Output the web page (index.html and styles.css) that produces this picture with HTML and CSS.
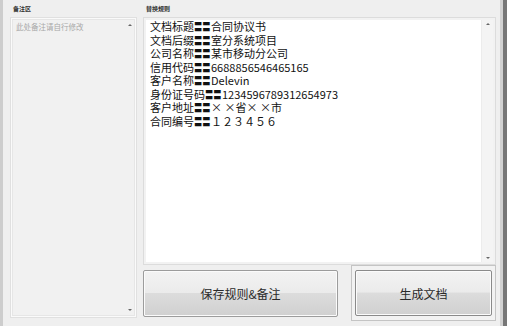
FILE: index.html
```html
<!DOCTYPE html>
<html lang="zh-CN">
<head>
    <meta charset="UTF-8">
    <title>文档生成</title>
    <link rel="stylesheet" href="styles.css">
</head>
<body>
    <div class="window">
        <div class="notes">
            <div class="label">备注区</div>
            <div class="notes-box">
                <span class="placeholder">此处备注请自行修改</span>
                <div class="scroll">
                    <span class="arrow up"></span>
                    <span class="arrow down"></span>
                </div>
            </div>
        </div>

        <div class="rules">
            <div class="label">替换规则</div>
            <div class="rules-box">
                <div class="rules-text">
                    <div>文档标题<b class="sep">〓〓</b>合同协议书</div>
                    <div>文档后缀<b class="sep">〓〓</b>室分系统项目</div>
                    <div>公司名称<b class="sep">〓〓</b>某市移动分公司</div>
                    <div>信用代码<b class="sep">〓〓</b>6688856546465165</div>
                    <div>客户名称<b class="sep">〓〓</b>Delevin</div>
                    <div>身份证号码<b class="sep">〓〓</b>1234596789312654973</div>
                    <div>客户地址<b class="sep">〓〓</b>×&nbsp;×省×&nbsp;×市</div>
                    <div>合同编号<b class="sep">〓〓</b>１２３４５６</div>
                </div>
                <div class="scroll">
                    <span class="arrow up"></span>
                    <span class="arrow down"></span>
                </div>
            </div>
            <div class="actions">
                <button class="btn btn-save">保存规则&amp;备注</button>
                <div class="focus-frame">
                    <button class="btn btn-make">生成文档</button>
                </div>
            </div>
        </div>
    </div>
</body>
</html>
```

FILE: styles.css
```css
* {
    margin: 0;
    padding: 0;
    box-sizing: border-box;
}

body {
    width: 507px;
    height: 326px;
    overflow: hidden;
    background-color: #efefef;
    font-family: 'Noto Sans CJK SC', 'Microsoft YaHei', sans-serif;
    color: #222;
}

.window {
    display: flex;
    gap: 6px;
    height: 326px;
    padding: 4px 0 0 7px;
    border-left: 3px solid #cdcdcd;
    border-right: 4px solid #777;
    box-shadow: inset -3px 0 0 #d2d2d2;
}

.label {
    height: 13px;
    padding-left: 3px;
    font-size: 6px;
    font-weight: bold;
    line-height: 9px;
    color: #333;
}

/* 备注区 */
.notes {
    width: 127px;
    display: flex;
    flex-direction: column;
    padding-bottom: 8px;
}

.notes-box {
    flex: 1;
    display: flex;
    justify-content: space-between;
    background-color: #f1f1f1;
    border: 1px solid #e0e0e0;
    box-shadow: inset 0 0 0 1px #fafafa, inset 0 0 0 2px #e6e6e6;
    padding: 3px 2px 3px 5px;
}

.placeholder {
    font-size: 7.5px;
    color: #a8a8a8;
    line-height: 11px;
}

.scroll {
    width: 9px;
    display: flex;
    flex-direction: column;
    justify-content: space-between;
    align-items: center;
    padding: 3px 0;
}

.arrow {
    width: 0;
    height: 0;
    border-left: 2px solid transparent;
    border-right: 2px solid transparent;
}

.arrow.up {
    border-bottom: 2px solid #666;
}

.arrow.down {
    border-top: 2px solid #666;
}

/* 替换规则 */
.rules {
    width: 353px;
    display: flex;
    flex-direction: column;
}

.rules-box {
    height: 248px;
    display: flex;
    justify-content: space-between;
    background-color: #fff;
    border: 1px solid #dcdcdc;
    box-shadow: inset 0 0 0 2px #f2f2f2;
    padding: 2px 2px 2px 6px;
}

.rules-text {
    font-size: 11px;
    line-height: 13.5px;
    color: #111;
}

.sep {
    display: inline-block;
    font-weight: bold;
    transform: scaleX(0.75);
    transform-origin: left center;
    margin-right: -5px;
}

.rules-box .scroll {
    width: 12px;
    background-color: #f4f4f4;
    border-left: 1px solid #ececec;
}

.actions {
    display: flex;
    align-items: center;
    justify-content: space-between;
    height: 57px;
    padding-bottom: 1px;
}

.btn {
    font-family: inherit;
    font-size: 12px;
    color: #2a2a2a;
    border: 1px solid #9c9c9c;
    border-radius: 2px;
    background: linear-gradient(#f3f3f3, #ebebeb 48%, #dcdcdc 50%, #d0d0d0);
    box-shadow: inset 0 0 0 1px #fbfbfb;
    cursor: pointer;
}

.btn-save {
    width: 195px;
    height: 47px;
}

.focus-frame {
    width: 145px;
    height: 56px;
    padding: 4px 3px 4px 3px;
    border: 1px solid #c4c4c4;
    background-color: #f2f2f2;
}

.btn-make {
    width: 100%;
    height: 100%;
    border-color: #8a8a8a;
}
```
